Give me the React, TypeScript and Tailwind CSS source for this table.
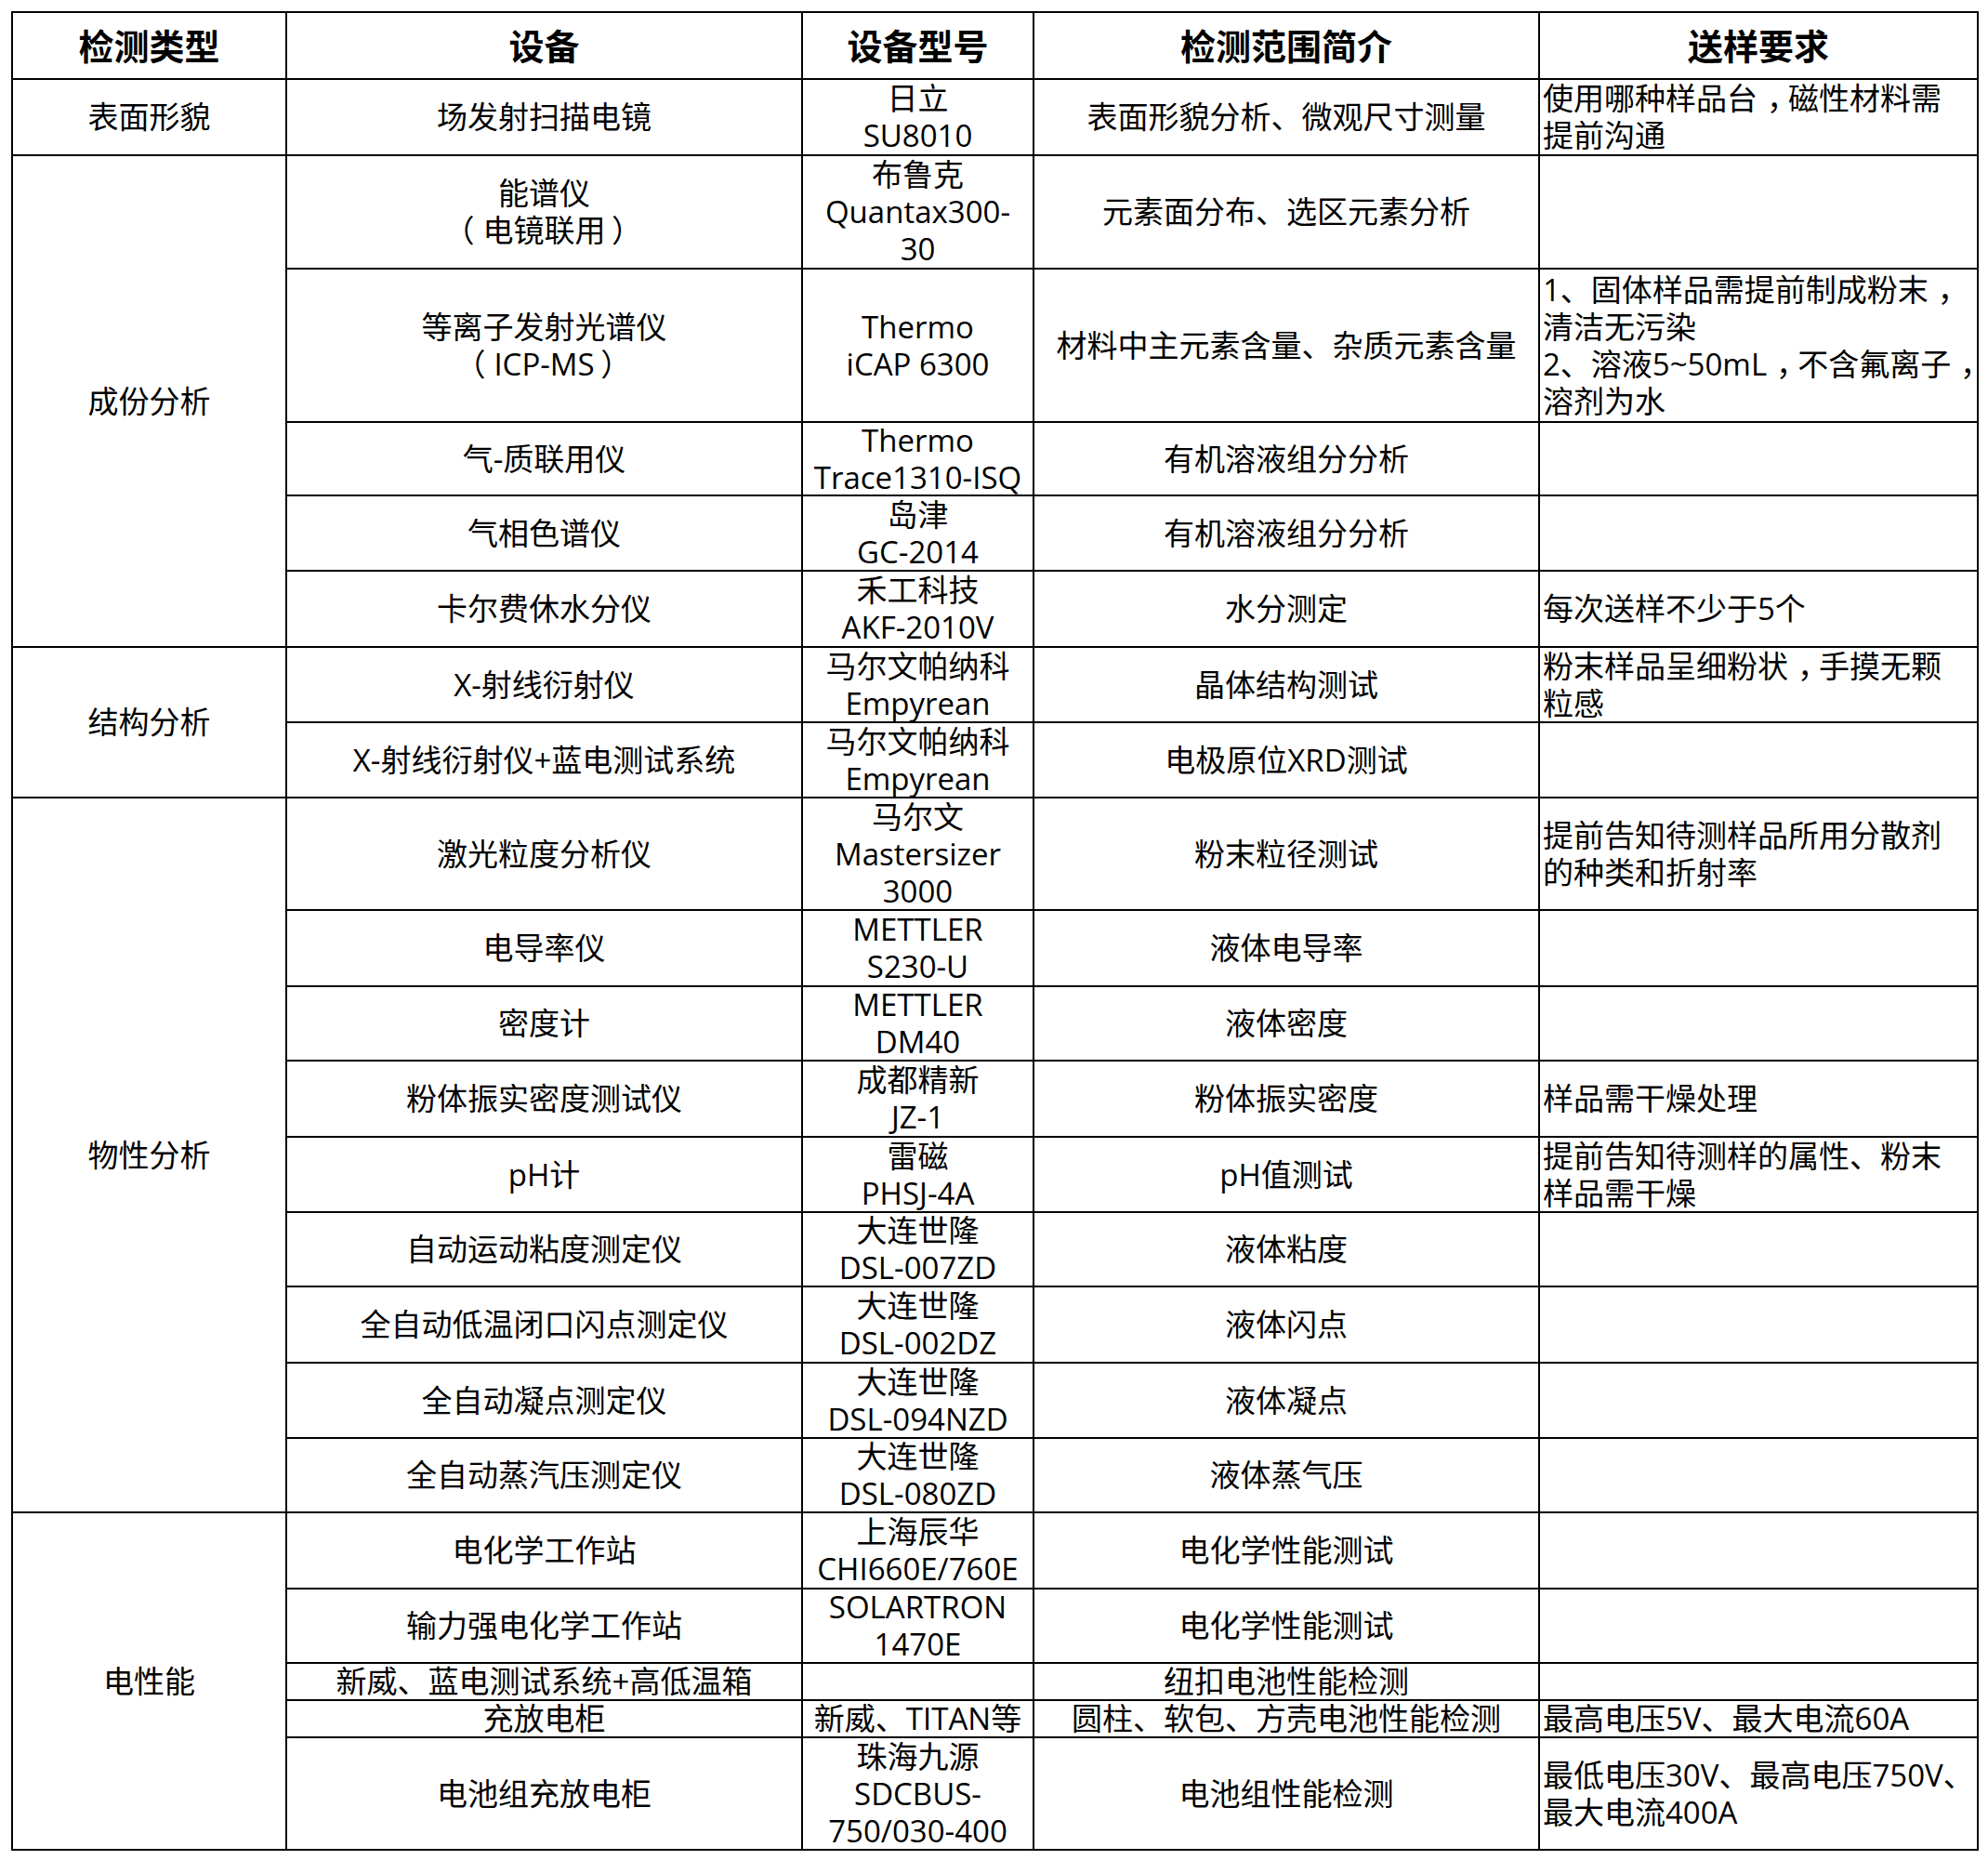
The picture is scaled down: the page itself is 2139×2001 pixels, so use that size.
import React from "react";

type Row = {
  device: string[];
  model: string[];
  scope: string[];
  req: string[];
};

type Group = {
  name: string;
  rows: Row[];
};

const groups: Group[] = [
  {
    name: "表面形貌",
    rows: [
      {
        device: ["场发射扫描电镜"],
        model: ["日立", "SU8010"],
        scope: ["表面形貌分析、微观尺寸测量"],
        req: ["使用哪种样品台，磁性材料需", "提前沟通"],
      },
    ],
  },
  {
    name: "成份分析",
    rows: [
      {
        device: ["能谱仪", "（电镜联用）"],
        model: ["布鲁克", "Quantax300-", "30"],
        scope: ["元素面分布、选区元素分析"],
        req: [],
      },
      {
        device: ["等离子发射光谱仪", "（ICP-MS）"],
        model: ["Thermo", "iCAP 6300"],
        scope: ["材料中主元素含量、杂质元素含量"],
        req: [
          "1、固体样品需提前制成粉末，",
          "清洁无污染",
          "2、溶液5~50mL，不含氟离子，",
          "溶剂为水",
        ],
      },
      {
        device: ["气-质联用仪"],
        model: ["Thermo", "Trace1310-ISQ"],
        scope: ["有机溶液组分分析"],
        req: [],
      },
      {
        device: ["气相色谱仪"],
        model: ["岛津", "GC-2014"],
        scope: ["有机溶液组分分析"],
        req: [],
      },
      {
        device: ["卡尔费休水分仪"],
        model: ["禾工科技", "AKF-2010V"],
        scope: ["水分测定"],
        req: ["每次送样不少于5个"],
      },
    ],
  },
  {
    name: "结构分析",
    rows: [
      {
        device: ["X-射线衍射仪"],
        model: ["马尔文帕纳科", "Empyrean"],
        scope: ["晶体结构测试"],
        req: ["粉末样品呈细粉状，手摸无颗", "粒感"],
      },
      {
        device: ["X-射线衍射仪+蓝电测试系统"],
        model: ["马尔文帕纳科", "Empyrean"],
        scope: ["电极原位XRD测试"],
        req: [],
      },
    ],
  },
  {
    name: "物性分析",
    rows: [
      {
        device: ["激光粒度分析仪"],
        model: ["马尔文", "Mastersizer", "3000"],
        scope: ["粉末粒径测试"],
        req: ["提前告知待测样品所用分散剂", "的种类和折射率"],
      },
      {
        device: ["电导率仪"],
        model: ["METTLER", "S230-U"],
        scope: ["液体电导率"],
        req: [],
      },
      {
        device: ["密度计"],
        model: ["METTLER", "DM40"],
        scope: ["液体密度"],
        req: [],
      },
      {
        device: ["粉体振实密度测试仪"],
        model: ["成都精新", "JZ-1"],
        scope: ["粉体振实密度"],
        req: ["样品需干燥处理"],
      },
      {
        device: ["pH计"],
        model: ["雷磁", "PHSJ-4A"],
        scope: ["pH值测试"],
        req: ["提前告知待测样的属性、粉末", "样品需干燥"],
      },
      {
        device: ["自动运动粘度测定仪"],
        model: ["大连世隆", "DSL-007ZD"],
        scope: ["液体粘度"],
        req: [],
      },
      {
        device: ["全自动低温闭口闪点测定仪"],
        model: ["大连世隆", "DSL-002DZ"],
        scope: ["液体闪点"],
        req: [],
      },
      {
        device: ["全自动凝点测定仪"],
        model: ["大连世隆", "DSL-094NZD"],
        scope: ["液体凝点"],
        req: [],
      },
      {
        device: ["全自动蒸汽压测定仪"],
        model: ["大连世隆", "DSL-080ZD"],
        scope: ["液体蒸气压"],
        req: [],
      },
    ],
  },
  {
    name: "电性能",
    rows: [
      {
        device: ["电化学工作站"],
        model: ["上海辰华", "CHI660E/760E"],
        scope: ["电化学性能测试"],
        req: [],
      },
      {
        device: ["输力强电化学工作站"],
        model: ["SOLARTRON", "1470E"],
        scope: ["电化学性能测试"],
        req: [],
      },
      {
        device: ["新威、蓝电测试系统+高低温箱"],
        model: [],
        scope: ["纽扣电池性能检测"],
        req: [],
      },
      {
        device: ["充放电柜"],
        model: ["新威、TITAN等"],
        scope: ["圆柱、软包、方壳电池性能检测"],
        req: ["最高电压5V、最大电流60A"],
      },
      {
        device: ["电池组充放电柜"],
        model: ["珠海九源", "SDCBUS-", "750/030-400"],
        scope: ["电池组性能检测"],
        req: ["最低电压30V、最高电压750V、", "最大电流400A"],
      },
    ],
  },
];

const spanClass: Record<number, string> = {
  1: "row-span-1",
  2: "row-span-2",
  5: "row-span-5",
  9: "row-span-9",
};

// fullwidth punctuation sits centred in the reference font, nudge Noto's glyphs to match
function renderLine(l: string) {
  const parts = l.split(/([（），])/);
  return parts.map((p, i) => {
    if (p === "（")
      return (
        <span key={i} className="ml-[-0.27em] mr-[0.27em]">
          {p}
        </span>
      );
    if (p === "）")
      return (
        <span key={i} className="ml-[0.2em] mr-[-0.2em]">
          {p}
        </span>
      );
    if (p === "，")
      return (
        <span key={i} className="ml-[0.3em] mr-[-0.3em]">
          {p}
        </span>
      );
    return p;
  });
}

function Cell({ lines, left = false }: { lines: string[]; left?: boolean }) {
  return (
    <div
      className={
        "flex flex-col justify-center bg-white leading-[40px] " +
        (left ? "items-start pl-[3px]" : "items-center text-center")
      }
    >
      {lines.map((l, i) => (
        <div key={i} className="whitespace-nowrap">
          {renderLine(l)}
        </div>
      ))}
    </div>
  );
}

export default function App() {
  const headers = ["检测类型", "设备", "设备型号", "检测范围简介", "送样要求"];

  return (
    <div className="min-h-[2001px] bg-white pl-[12px] pt-[12px] font-['Open_Sans','Noto_Sans_CJK_SC',sans-serif] text-[33px] text-black">
      <div className="grid w-fit grid-cols-[293px_553px_247px_542px_470px] grid-rows-[70px_80px_120px_163px_77px_79px_80px_79px_79px_119px_80px_78px_80px_79px_78px_80px_79px_78px_80px_78px_38px_38px_119px] gap-[2px] bg-black p-[2px]">
        {headers.map((h) => (
          <div
            key={h}
            className="flex items-center justify-center bg-white text-[38px] font-bold"
          >
            {h}
          </div>
        ))}
        {groups.map((g) => (
          <React.Fragment key={g.name}>
            <div
              className={
                "flex items-center justify-center bg-white " +
                spanClass[g.rows.length]
              }
            >
              {g.name}
            </div>
            {g.rows.map((r, i) => (
              <React.Fragment key={i}>
                <Cell lines={r.device} />
                <Cell lines={r.model} />
                <Cell lines={r.scope} />
                <Cell lines={r.req} left />
              </React.Fragment>
            ))}
          </React.Fragment>
        ))}
      </div>
    </div>
  );
}
